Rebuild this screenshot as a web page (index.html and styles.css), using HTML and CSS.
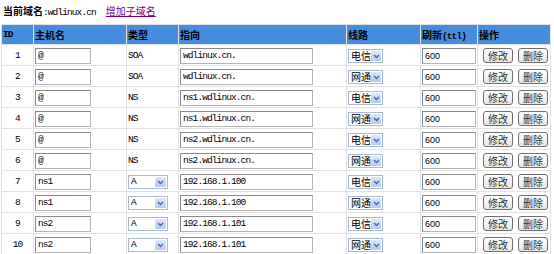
FILE: index.html
```html
<!DOCTYPE html>
<html lang="zh-CN">
<head>
  <meta charset="UTF-8">
  <title>子域名管理</title>
  <link rel="stylesheet" href="styles.css">
</head>
<body>
  <div class="title"><b>当前域名</b><span class="mono">:wdlinux.cn</span><a href="#">增加子域名</a></div>

  <table class="dns">
    <colgroup>
      <col class="c-id"><col class="c-host"><col class="c-type"><col class="c-target">
      <col class="c-line"><col class="c-ttl"><col class="c-ops">
    </colgroup>
    <thead>
      <tr>
        <th class="mono">ID</th>
        <th>主机名</th>
        <th>类型</th>
        <th>指向</th>
        <th>线路</th>
        <th>刷新<span class="mono">(ttl)</span></th>
        <th>操作</th>
      </tr>
    </thead>
    <tbody>
      <tr>
        <td class="id mono">1</td>
        <td><input class="txt w-host" value="@"></td>
        <td class="mono">SOA</td>
        <td><input class="txt w-target" value="wdlinux.cn."></td>
        <td><span class="combo w-line"><span>电信</span><span class="arrow"><svg width="7" height="5" viewBox="0 0 7 5"><path d="M1 1 L3.5 3.5 L6 1" fill="none" stroke="#4a69a6" stroke-width="1.5"/></svg></span></span></td>
        <td><input class="txt num w-ttl" value="600"></td>
        <td class="ops"><button class="btn">修改</button><button class="btn">删除</button></td>
      </tr>
      <tr>
        <td class="id mono">2</td>
        <td><input class="txt w-host" value="@"></td>
        <td class="mono">SOA</td>
        <td><input class="txt w-target" value="wdlinux.cn."></td>
        <td><span class="combo w-line"><span>网通</span><span class="arrow"><svg width="7" height="5" viewBox="0 0 7 5"><path d="M1 1 L3.5 3.5 L6 1" fill="none" stroke="#4a69a6" stroke-width="1.5"/></svg></span></span></td>
        <td><input class="txt num w-ttl" value="600"></td>
        <td class="ops"><button class="btn">修改</button><button class="btn">删除</button></td>
      </tr>
      <tr>
        <td class="id mono">3</td>
        <td><input class="txt w-host" value="@"></td>
        <td class="mono">NS</td>
        <td><input class="txt w-target" value="ns1.wdlinux.cn."></td>
        <td><span class="combo w-line"><span>电信</span><span class="arrow"><svg width="7" height="5" viewBox="0 0 7 5"><path d="M1 1 L3.5 3.5 L6 1" fill="none" stroke="#4a69a6" stroke-width="1.5"/></svg></span></span></td>
        <td><input class="txt num w-ttl" value="600"></td>
        <td class="ops"><button class="btn">修改</button><button class="btn">删除</button></td>
      </tr>
      <tr>
        <td class="id mono">4</td>
        <td><input class="txt w-host" value="@"></td>
        <td class="mono">NS</td>
        <td><input class="txt w-target" value="ns1.wdlinux.cn."></td>
        <td><span class="combo w-line"><span>网通</span><span class="arrow"><svg width="7" height="5" viewBox="0 0 7 5"><path d="M1 1 L3.5 3.5 L6 1" fill="none" stroke="#4a69a6" stroke-width="1.5"/></svg></span></span></td>
        <td><input class="txt num w-ttl" value="600"></td>
        <td class="ops"><button class="btn">修改</button><button class="btn">删除</button></td>
      </tr>
      <tr>
        <td class="id mono">5</td>
        <td><input class="txt w-host" value="@"></td>
        <td class="mono">NS</td>
        <td><input class="txt w-target" value="ns2.wdlinux.cn."></td>
        <td><span class="combo w-line"><span>电信</span><span class="arrow"><svg width="7" height="5" viewBox="0 0 7 5"><path d="M1 1 L3.5 3.5 L6 1" fill="none" stroke="#4a69a6" stroke-width="1.5"/></svg></span></span></td>
        <td><input class="txt num w-ttl" value="600"></td>
        <td class="ops"><button class="btn">修改</button><button class="btn">删除</button></td>
      </tr>
      <tr>
        <td class="id mono">6</td>
        <td><input class="txt w-host" value="@"></td>
        <td class="mono">NS</td>
        <td><input class="txt w-target" value="ns2.wdlinux.cn."></td>
        <td><span class="combo w-line"><span>网通</span><span class="arrow"><svg width="7" height="5" viewBox="0 0 7 5"><path d="M1 1 L3.5 3.5 L6 1" fill="none" stroke="#4a69a6" stroke-width="1.5"/></svg></span></span></td>
        <td><input class="txt num w-ttl" value="600"></td>
        <td class="ops"><button class="btn">修改</button><button class="btn">删除</button></td>
      </tr>
      <tr>
        <td class="id mono">7</td>
        <td><input class="txt w-host" value="ns1"></td>
        <td><span class="combo w-type"><span class="mono">A</span><span class="arrow"><svg width="7" height="5" viewBox="0 0 7 5"><path d="M1 1 L3.5 3.5 L6 1" fill="none" stroke="#4a69a6" stroke-width="1.5"/></svg></span></span></td>
        <td><input class="txt w-target" value="192.168.1.100"></td>
        <td><span class="combo w-line"><span>电信</span><span class="arrow"><svg width="7" height="5" viewBox="0 0 7 5"><path d="M1 1 L3.5 3.5 L6 1" fill="none" stroke="#4a69a6" stroke-width="1.5"/></svg></span></span></td>
        <td><input class="txt num w-ttl" value="600"></td>
        <td class="ops"><button class="btn">修改</button><button class="btn">删除</button></td>
      </tr>
      <tr>
        <td class="id mono">8</td>
        <td><input class="txt w-host" value="ns1"></td>
        <td><span class="combo w-type"><span class="mono">A</span><span class="arrow"><svg width="7" height="5" viewBox="0 0 7 5"><path d="M1 1 L3.5 3.5 L6 1" fill="none" stroke="#4a69a6" stroke-width="1.5"/></svg></span></span></td>
        <td><input class="txt w-target" value="192.168.1.100"></td>
        <td><span class="combo w-line"><span>网通</span><span class="arrow"><svg width="7" height="5" viewBox="0 0 7 5"><path d="M1 1 L3.5 3.5 L6 1" fill="none" stroke="#4a69a6" stroke-width="1.5"/></svg></span></span></td>
        <td><input class="txt num w-ttl" value="600"></td>
        <td class="ops"><button class="btn">修改</button><button class="btn">删除</button></td>
      </tr>
      <tr>
        <td class="id mono">9</td>
        <td><input class="txt w-host" value="ns2"></td>
        <td><span class="combo w-type"><span class="mono">A</span><span class="arrow"><svg width="7" height="5" viewBox="0 0 7 5"><path d="M1 1 L3.5 3.5 L6 1" fill="none" stroke="#4a69a6" stroke-width="1.5"/></svg></span></span></td>
        <td><input class="txt w-target" value="192.168.1.101"></td>
        <td><span class="combo w-line"><span>电信</span><span class="arrow"><svg width="7" height="5" viewBox="0 0 7 5"><path d="M1 1 L3.5 3.5 L6 1" fill="none" stroke="#4a69a6" stroke-width="1.5"/></svg></span></span></td>
        <td><input class="txt num w-ttl" value="600"></td>
        <td class="ops"><button class="btn">修改</button><button class="btn">删除</button></td>
      </tr>
      <tr>
        <td class="id mono">10</td>
        <td><input class="txt w-host" value="ns2"></td>
        <td><span class="combo w-type"><span class="mono">A</span><span class="arrow"><svg width="7" height="5" viewBox="0 0 7 5"><path d="M1 1 L3.5 3.5 L6 1" fill="none" stroke="#4a69a6" stroke-width="1.5"/></svg></span></span></td>
        <td><input class="txt w-target" value="192.168.1.101"></td>
        <td><span class="combo w-line"><span>网通</span><span class="arrow"><svg width="7" height="5" viewBox="0 0 7 5"><path d="M1 1 L3.5 3.5 L6 1" fill="none" stroke="#4a69a6" stroke-width="1.5"/></svg></span></span></td>
        <td><input class="txt num w-ttl" value="600"></td>
        <td class="ops"><button class="btn">修改</button><button class="btn">删除</button></td>
      </tr>
    </tbody>
  </table>
</body>
</html>
```

FILE: styles.css
```css
body {
  margin: 0;
  font-family: "Noto Sans CJK SC", sans-serif;
  font-size: 10px;
  color: #000;
  background: #fff;
}
.mono {
  font-family: "Liberation Mono", monospace;
  font-size: 9.5px;
  letter-spacing: -0.9px;
}
.title {
  height: 24px;
  line-height: 22px;
  padding-left: 3px;
}
.title a {
  color: #800080;
  margin-left: 10px;
  text-decoration: underline;
}
.dns {
  margin-left: 1px;
  width: 550px;
  table-layout: fixed;
  border-collapse: separate;
  border-spacing: 1px;
  background: #e2e2e2;
}
.c-id { width: 31px; }
.c-host { width: 92px; }
.c-type { width: 51px; }
.c-target { width: 167px; }
.c-line { width: 73px; }
.c-ttl { width: 56px; }
.c-ops { width: 72px; }
.dns th {
  background: #468de0;
  height: 19px;
  padding: 0 0 0 1px;
  text-align: left;
  font-weight: bold;
}
.dns td {
  background: #fff;
  height: 20px;
  padding: 0 0 0 1px;
  white-space: nowrap;
}
.dns td.id {
  text-align: center;
  padding: 0;
}
.txt {
  box-sizing: border-box;
  height: 16px;
  margin: 0;
  padding: 0 2px;
  border: 1px solid #b4b4b4;
  border-top-color: #8a8a8a;
  border-left-color: #8a8a8a;
  font-family: "Liberation Mono", monospace;
  font-size: 9.5px;
  letter-spacing: -0.9px;
  color: #000;
  vertical-align: middle;
}
.txt.num {
  font-family: "Liberation Sans", sans-serif;
  font-size: 9px;
  letter-spacing: 0;
}
.w-host { width: 56px; }
.w-target { width: 133px; }
.w-ttl { width: 54px; }
.combo {
  box-sizing: border-box;
  display: inline-flex;
  align-items: center;
  justify-content: space-between;
  height: 14px;
  padding-left: 2px;
  border: 1px solid #a9bad3;
  background: #fff;
  vertical-align: middle;
  line-height: 12px;
}
.w-line { width: 35px; }
.w-type { width: 40px; }
.arrow {
  display: flex;
  align-items: center;
  justify-content: center;
  width: 11px;
  height: 10px;
  margin-right: 1px;
  border-radius: 1px;
  background: linear-gradient(#dde7fb, #b5c9f3);
}
.ops {
  padding-left: 5px !important;
}
.btn {
  box-sizing: border-box;
  width: 30px;
  height: 15px;
  margin: 0;
  padding: 0;
  border: 1px solid #6e6e6e;
  border-radius: 3px;
  background: linear-gradient(#ffffff, #e8e8e2);
  font-family: "Noto Sans CJK SC", sans-serif;
  font-size: 10px;
  line-height: 12px;
  color: #333;
  vertical-align: middle;
}
.btn + .btn {
  margin-left: 5px;
}
```
